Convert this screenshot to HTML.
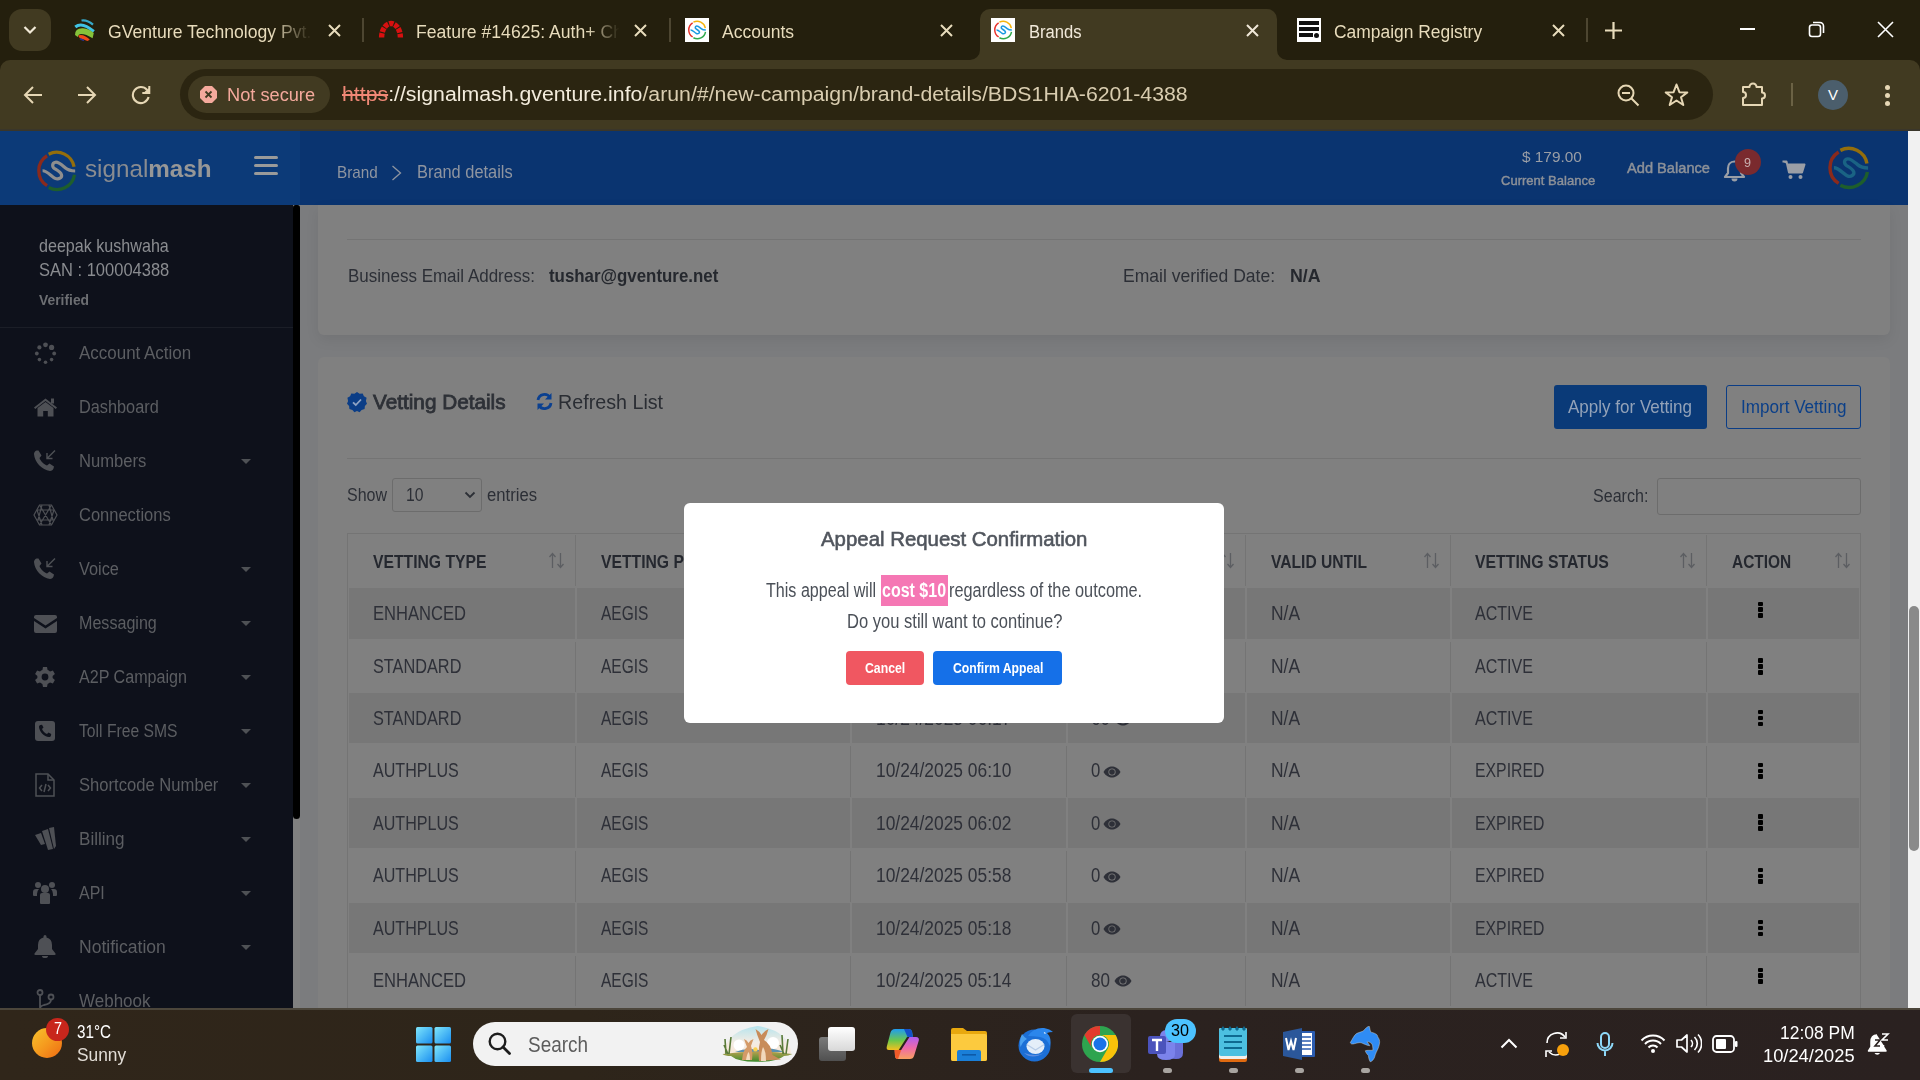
<!DOCTYPE html>
<html><head><meta charset="utf-8">
<style>
*{box-sizing:border-box;margin:0;padding:0}
html,body{width:1920px;height:1080px;overflow:hidden;background:#241f0d;font-family:"Liberation Sans",sans-serif}
.a{position:absolute}
.tx{position:absolute;white-space:nowrap;transform-origin:0 0}
.fav{width:24px;height:24px;background:#fff}
</style></head><body>
<!-- TAB STRIP -->
<div class="a" style="left:0;top:0;width:1920px;height:60px;background:#241f0d"></div>
<div class="a" style="left:9px;top:9px;width:42px;height:42px;border-radius:13px;background:#413a21"></div>
<svg class="a" style="left:23px;top:25px" width="14" height="10" viewBox="0 0 14 10"><path d="M1.5 2 L7 7.5 L12.5 2" fill="none" stroke="#f2ead8" stroke-width="2.2"/></svg>
<!-- tab1 -->
<svg class="a" style="left:74px;top:19px" width="22" height="22" viewBox="0 0 22 22">
<path d="M7.5 1.5Q13 0.5 19 5.6" fill="none" stroke="#36a8c8" stroke-width="2.2"/>
<path d="M1.3 8Q8 2.2 19.8 12.5" fill="none" stroke="#40c4e4" stroke-width="3"/>
<path d="M1 16Q1 8.8 9 9.3Q15.5 10 19.8 14L18.6 19.3Q12 15 7.2 15Q4.3 15 3.8 18Z" fill="#86c23a"/>
<path d="M4 16.6Q7.5 15.4 11.2 17.2Q14.5 19 15.8 20.8L13.4 22Q9.5 20.3 6 19.6Z" fill="#f24818"/>
<path d="M6 19.8L10 21.5" fill="none" stroke="#2a3090" stroke-width="1.5"/>
</svg>
<svg class="a xx" style="left:328px;top:24px" width="13" height="13" viewBox="0 0 13 13"><path d="M1 1L12 12M12 1L1 12" stroke="#e8dcbc" stroke-width="2"/></svg>
<div class="a" style="left:362px;top:18px;width:2px;height:24px;background:#4d4631"></div>
<!-- tab2 -->
<svg class="a" style="left:378px;top:20px" width="26" height="18" viewBox="0 0 26 18">
<path d="M3.6 17.5A9.4 14 0 0 1 22.4 17.5" fill="none" stroke="#d81010" stroke-width="5.4" stroke-dasharray="4.5 1"/>
</svg>
<svg class="a" style="left:634px;top:24px" width="13" height="13" viewBox="0 0 13 13"><path d="M1 1L12 12M12 1L1 12" stroke="#e8dcbc" stroke-width="2"/></svg>
<div class="a" style="left:669px;top:18px;width:2px;height:24px;background:#4d4631"></div>
<!-- tab3 -->
<svg class="a" style="left:685px;top:18px" width="24" height="24" viewBox="0 0 46 46"><rect width="46" height="46" fill="#fff"/>
<path d="M13.2 6.3A19.4 19.4 0 0 0 13.2 39.1" fill="none" stroke="#e8312a" stroke-width="3.4" transform="translate(23 23) scale(0.82) translate(-23.4 -22.9)"/>
<path d="M15 4.6A19.4 19.4 0 0 1 42.8 18.3" fill="none" stroke="#f5b40c" stroke-width="3.4" transform="translate(23 23) scale(0.82) translate(-23.4 -22.9)"/>
<path d="M43.3 27.1A19.4 19.4 0 0 1 15 41" fill="none" stroke="#2fa84a" stroke-width="3.4" transform="translate(23 23) scale(0.82) translate(-23.4 -22.9)"/>
<path d="M8.3 22.7C13 22.5 18 29 22 31C26 33 30 30 29 27C28 24 24 22 21.5 20.5C18.5 18.5 18.5 14 22.5 13.4C26 13 30 17 33 19.5C36 22 38 23 44 23" fill="none" stroke="#1a9ae0" stroke-width="3.6" transform="translate(23 23) scale(0.82) translate(-23.4 -22.9)"/></svg>
<svg class="a" style="left:940px;top:24px" width="13" height="13" viewBox="0 0 13 13"><path d="M1 1L12 12M12 1L1 12" stroke="#e8dcbc" stroke-width="2"/></svg>
<!-- active tab -->
<div class="a" style="left:980px;top:9px;width:297px;height:51px;background:#413a21;border-radius:10px 10px 0 0"></div>
<svg class="a" style="left:970px;top:50px" width="10" height="10" viewBox="0 0 10 10"><path d="M0 10 A10 10 0 0 0 10 0 V10Z" fill="#413a21"/></svg>
<svg class="a" style="left:1277px;top:50px" width="10" height="10" viewBox="0 0 10 10"><path d="M0 0 A10 10 0 0 0 10 10 H0Z" fill="#413a21"/></svg>
<svg class="a" style="left:991px;top:18px" width="24" height="24" viewBox="0 0 46 46"><rect width="46" height="46" fill="#fff"/>
<path d="M13.2 6.3A19.4 19.4 0 0 0 13.2 39.1" fill="none" stroke="#e8312a" stroke-width="3.4" transform="translate(23 23) scale(0.82) translate(-23.4 -22.9)"/>
<path d="M15 4.6A19.4 19.4 0 0 1 42.8 18.3" fill="none" stroke="#f5b40c" stroke-width="3.4" transform="translate(23 23) scale(0.82) translate(-23.4 -22.9)"/>
<path d="M43.3 27.1A19.4 19.4 0 0 1 15 41" fill="none" stroke="#2fa84a" stroke-width="3.4" transform="translate(23 23) scale(0.82) translate(-23.4 -22.9)"/>
<path d="M8.3 22.7C13 22.5 18 29 22 31C26 33 30 30 29 27C28 24 24 22 21.5 20.5C18.5 18.5 18.5 14 22.5 13.4C26 13 30 17 33 19.5C36 22 38 23 44 23" fill="none" stroke="#1a9ae0" stroke-width="3.6" transform="translate(23 23) scale(0.82) translate(-23.4 -22.9)"/></svg>
<svg class="a" style="left:1246px;top:24px" width="13" height="13" viewBox="0 0 13 13"><path d="M1 1L12 12M12 1L1 12" stroke="#f0e8d8" stroke-width="2"/></svg>
<!-- tab5 -->
<svg class="a" style="left:1297px;top:18px" width="24" height="24" viewBox="0 0 24 24">
<rect width="24" height="24" fill="#fff"/><rect x="2" y="3" width="20" height="4" fill="#111"/><rect x="2" y="9" width="20" height="4" fill="#111"/><rect x="2" y="15" width="14" height="4" fill="#111"/><circle cx="19.5" cy="17.5" r="2.5" fill="#111"/>
</svg>
<svg class="a" style="left:1552px;top:24px" width="13" height="13" viewBox="0 0 13 13"><path d="M1 1L12 12M12 1L1 12" stroke="#e8dcbc" stroke-width="2"/></svg>
<div class="a" style="left:1586px;top:18px;width:2px;height:24px;background:#4d4631"></div>
<svg class="a" style="left:1605px;top:22px" width="17" height="17" viewBox="0 0 17 17"><path d="M8.5 0V17M0 8.5H17" stroke="#e8dcbc" stroke-width="2.2"/></svg>
<!-- window controls -->
<div class="a" style="left:1740px;top:28px;width:15px;height:2px;background:#fff"></div>
<svg class="a" style="left:1808px;top:21px" width="17" height="17" viewBox="0 0 17 17"><rect x="1.5" y="4" width="11" height="11.5" rx="2.5" fill="none" stroke="#fff" stroke-width="1.6"/><path d="M5 1.5H12A3.5 3.5 0 0 1 15.5 5V12" fill="none" stroke="#fff" stroke-width="1.6"/></svg>
<svg class="a" style="left:1877px;top:21px" width="17" height="17" viewBox="0 0 17 17"><path d="M1 1L16 16M16 1L1 16" stroke="#fff" stroke-width="1.6"/></svg>

<!-- TOOLBAR -->
<div class="a" style="left:0;top:60px;width:1920px;height:69px;background:#413a21;border-radius:10px 10px 0 0"></div>
<div class="a" style="left:0;top:129px;width:1920px;height:2px;background:#3a362a"></div>
<svg class="a" style="left:23px;top:85px" width="20" height="20" viewBox="0 0 20 20"><path d="M19 10H2.5M10 2L2 10L10 18" fill="none" stroke="#e6d7b5" stroke-width="2"/></svg>
<svg class="a" style="left:77px;top:85px" width="20" height="20" viewBox="0 0 20 20"><path d="M1 10H17.5M10 2L18 10L10 18" fill="none" stroke="#e6d7b5" stroke-width="2"/></svg>
<svg class="a" style="left:131px;top:85px" width="20" height="20" viewBox="0 0 20 20"><path d="M16 4.9A8 8 0 1 0 17.6 12.1" fill="none" stroke="#e6d7b5" stroke-width="2.1"/><path d="M11.3 7H17.3V0.9H19.3V9H11.3Z M13.5 7L17.3 3.2V7Z" fill="#e6d7b5"/></svg>
<div class="a" style="left:180px;top:69px;width:1533px;height:51px;border-radius:26px;background:#2b2511"></div>
<div class="a" style="left:188px;top:76px;width:142px;height:37px;border-radius:19px;background:#413a21"></div>
<svg class="a" style="left:200px;top:86px" width="17" height="17" viewBox="0 0 17 17"><path d="M5 0H12L17 5V12L12 17H5L0 12V5Z" fill="#f4a99c"/><path d="M5.5 5.5L11.5 11.5M11.5 5.5L5.5 11.5" stroke="#413a21" stroke-width="1.8"/></svg>
<svg class="a" style="left:1617px;top:84px" width="23" height="23" viewBox="0 0 23 23"><circle cx="9" cy="9" r="7.5" fill="none" stroke="#e6d7b5" stroke-width="2"/><path d="M5 9H13M14.5 14.5L21.5 21.5" stroke="#e6d7b5" stroke-width="2"/></svg>
<svg class="a" style="left:1664px;top:83px" width="25" height="24" viewBox="0 0 25 24"><path d="M12.5 1.5L15.4 9.2L23.3 9.4L17 14.3L19.3 22L12.5 17.5L5.7 22L8 14.3L1.7 9.4L9.6 9.2Z" fill="none" stroke="#e6d7b5" stroke-width="2" stroke-linejoin="round"/></svg>
<svg class="a" style="left:1741px;top:81px" width="27" height="26" viewBox="0 0 27 26"><path d="M2 6H8.5A3.5 3.5 0 0 1 15.5 6H21V11.5A3 3 0 0 1 21 17.5V24H2V17A3 3 0 0 0 2 11Z" fill="none" stroke="#e6d7b5" stroke-width="2" stroke-linejoin="round"/></svg>
<div class="a" style="left:1791px;top:83px;width:2px;height:23px;background:#6b6245"></div>
<div class="a" style="left:1818px;top:80px;width:30px;height:30px;border-radius:50%;background:#4b5e6c;color:#fff;font-size:15px;text-align:center;line-height:30px">V</div>
<div class="a" style="left:1885px;top:85px;width:5px;height:5px;border-radius:50%;background:#e6d7b5"></div>
<div class="a" style="left:1885px;top:93px;width:5px;height:5px;border-radius:50%;background:#e6d7b5"></div>
<div class="a" style="left:1885px;top:101px;width:5px;height:5px;border-radius:50%;background:#e6d7b5"></div>
<!-- ======== PAGE ======== -->
<div class="a" style="left:0;top:131px;width:1908px;height:74px;background:#0a3470"></div>
<div class="a" style="left:0;top:131px;width:300px;height:74px;background:#0c3a78"></div>
<!-- logo -->
<svg class="a" style="left:35px;top:150px" width="42" height="42" viewBox="0 0 46 46">
<path d="M13.2 6.3A19.4 19.4 0 0 0 13.2 39.1" fill="none" stroke="#8a2a1c" stroke-width="3.6"/>
<path d="M15 4.6A19.4 19.4 0 0 1 42.8 18.3" fill="none" stroke="#946e0c" stroke-width="3.6"/>
<path d="M43.3 27.1A19.4 19.4 0 0 1 15 41" fill="none" stroke="#1e5e2c" stroke-width="3.6"/>
<path d="M8.3 22.7C13 22.5 18 29 22 31C26 33 30 30 29 27C28 24 24 22 21.5 20.5C18.5 18.5 18.5 14 22.5 13.4C26 13 30 17 33 19.5C36 22 38 23 44 23" fill="none" stroke="#8e8e8e" stroke-width="3.5"/>
</svg>
<div class="a" style="left:254px;top:156px;width:23.5px;height:3px;border-radius:2px;background:#9a9a9a"></div>
<div class="a" style="left:254px;top:164px;width:23.5px;height:3px;border-radius:2px;background:#9a9a9a"></div>
<div class="a" style="left:254px;top:172px;width:23.5px;height:3px;border-radius:2px;background:#9a9a9a"></div>
<svg class="a" style="left:391px;top:165px" width="11" height="16" viewBox="0 0 11 16"><path d="M1.5 1L9.5 8L1.5 15" fill="none" stroke="#8f95a0" stroke-width="1.3"/></svg>
<!-- bell -->
<svg class="a" style="left:1723px;top:159px" width="23" height="23" viewBox="0 0 23 23"><path d="M11.5 2.5C7 2.5 5 6 5 9.5V14L2 18H21L18 14V9.5C18 6 16 2.5 11.5 2.5Z" fill="none" stroke="#9a9ea6" stroke-width="2.2" stroke-linejoin="round"/><path d="M8.5 19.5A3 3 0 0 0 14.5 19.5" fill="#9a9ea6"/></svg>
<div class="a" style="left:1735px;top:149px;width:26px;height:26px;border-radius:50%;background:#7a2a2e"></div>
<!-- cart -->
<svg class="a" style="left:1782px;top:160px" width="24" height="20" viewBox="0 0 24 20"><path d="M0.5 1.5H4.5L7 12.5H20L22.5 4.5H6" fill="#9a9ea6" stroke="#9a9ea6" stroke-width="2" stroke-linejoin="round"/><circle cx="8.5" cy="17" r="2" fill="#9a9ea6"/><circle cx="18.5" cy="17" r="2" fill="#9a9ea6"/></svg>
<!-- right logo -->
<svg class="a" style="left:1826px;top:146px" width="44" height="44" viewBox="0 0 46 46">
<path d="M13.2 6.3A19.4 19.4 0 0 0 13.2 39.1" fill="none" stroke="#8a2a1c" stroke-width="3.6"/>
<path d="M15 4.6A19.4 19.4 0 0 1 42.8 18.3" fill="none" stroke="#946e0c" stroke-width="3.6"/>
<path d="M43.3 27.1A19.4 19.4 0 0 1 15 41" fill="none" stroke="#1e5e2c" stroke-width="3.6"/>
<path d="M8.3 22.7C13 22.5 18 29 22 31C26 33 30 30 29 27C28 24 24 22 21.5 20.5C18.5 18.5 18.5 14 22.5 13.4C26 13 30 17 33 19.5C36 22 38 23 44 23" fill="none" stroke="#1a6384" stroke-width="3.5"/>
</svg>

<!-- sidebar -->
<div class="a" style="left:0;top:205px;width:293px;height:803px;background:#0e111b"></div>
<div class="a" style="left:293px;top:205px;width:7px;height:803px;background:#808080"></div>
<div class="a" style="left:293px;top:205px;width:7px;height:614px;background:#000;border-radius:3px 3px 4px 4px"></div>
<div class="a" style="left:0;top:327px;width:293px;height:1px;background:#1b1e27"></div>

<!-- content bg -->
<div class="a" style="left:300px;top:205px;width:1608px;height:803px;background:#7b7c7e"></div>
<!-- card1 -->
<div class="a" style="left:318px;top:205px;width:1572px;height:130px;background:#808080;border-radius:0 0 6px 6px;box-shadow:0 5px 14px rgba(0,0,0,0.07)"></div>
<div class="a" style="left:347px;top:239px;width:1514px;height:1px;background:#747474"></div>
<!-- card2 -->
<div class="a" style="left:318px;top:357px;width:1572px;height:651px;background:#808080;border-radius:6px 6px 0 0"></div>
<svg class="a" style="left:346px;top:391px" width="22" height="22" viewBox="0 0 22 22">
<path d="M11 1L13.6 2.7L16.7 2.4L17.9 5.2L20.6 6.8L19.9 9.9L21 12.7L18.9 15L18.6 18.1L15.6 18.9L13.6 21.3L11 20L8.4 21.3L6.4 18.9L3.4 18.1L3.1 15L1 12.7L2.1 9.9L1.4 6.8L4.1 5.2L5.3 2.4L8.4 2.7Z" fill="#0b3d86"/>
<path d="M7 11.3L9.8 14L15 8.5" fill="none" stroke="#8fa3c4" stroke-width="1.8"/>
</svg>
<svg class="a" style="left:535px;top:392px" width="19" height="19" viewBox="0 0 19 19">
<path d="M3 8A6.5 6.5 0 0 1 15 5.5" fill="none" stroke="#0b4090" stroke-width="2.8"/><path d="M16.5 1V7.5H10Z" fill="#0b4090"/>
<path d="M16 11A6.5 6.5 0 0 1 4 13.5" fill="none" stroke="#0b4090" stroke-width="2.8"/><path d="M2.5 18V11.5H9Z" fill="#0b4090"/>
</svg>
<div class="a" style="left:1554px;top:385px;width:153px;height:44px;background:#0a3a78;border-radius:3px"></div>
<div class="a" style="left:1726px;top:385px;width:135px;height:44px;border:1.5px solid #0b3d86;border-radius:3px"></div>
<div class="a" style="left:347px;top:458px;width:1514px;height:1px;background:#747474"></div>
<div class="a" style="left:392px;top:478px;width:90px;height:34px;border:1px solid #6c6c6c;border-radius:3px"></div>
<svg class="a" style="left:464px;top:491px" width="12" height="8" viewBox="0 0 12 8"><path d="M1.5 1.5L6 6L10.5 1.5" fill="none" stroke="#2c2f36" stroke-width="1.8"/></svg>
<div class="a" style="left:1657px;top:478px;width:204px;height:37px;border:1px solid #6c6c6c;border-radius:3px"></div>
<!-- browser scrollbar -->
<div class="a" style="left:1908px;top:131px;width:12px;height:877px;background:#f1f1f1"></div>
<div class="a" style="left:1909px;top:606px;width:10px;height:245px;border-radius:5px;background:#8a8a8a"></div>
<!-- sidebar icons -->
<svg class="a" style="left:34px;top:342px" width="23" height="23" viewBox="0 0 23 23" fill="#4e5055">
<circle cx="11.5" cy="2.8" r="2.4"/><circle cx="17.6" cy="5.4" r="2.6"/><circle cx="20.2" cy="11.5" r="1.9"/><circle cx="17.6" cy="17.6" r="1.8"/>
<circle cx="11.5" cy="20.2" r="1.8"/><circle cx="5.4" cy="17.6" r="1.8"/><circle cx="2.8" cy="11.5" r="1.9"/><circle cx="5.4" cy="5.4" r="2.1"/>
</svg>
<svg class="a" style="left:33px;top:397px" width="25" height="20" viewBox="0 0 25 20" fill="#4e5055">
<path d="M1 10.5L12.5 1.5L24 10.5L22.8 12L12.5 4L2.2 12Z"/><rect x="18" y="1.5" width="3" height="5"/>
<path d="M4.5 11L12.5 5L20.5 11V19.5H14.8V14H10.2V19.5H4.5Z"/>
</svg>
<svg class="a" style="left:33px;top:449px" width="24" height="23" viewBox="0 0 24 23">
<path d="M3.5 1.5C2 2 1 3.5 1 5C1.5 13 9 21 17 22C18.8 22 20 21 20.5 19.5L21 17.5L16.5 14.5L14 16.5C11 15.5 7.5 12 6.5 9L8.5 6.5L5.5 1.5Z" fill="#4e5055"/>
<path d="M22 1.5L14 9.5M14 4V9.5H19.5" fill="none" stroke="#4e5055" stroke-width="1.4"/>
</svg>
<svg class="a" style="left:33px;top:504px" width="25" height="22" viewBox="0 0 25 22" fill="none" stroke="#4e5055" stroke-width="1.2">
<path d="M6.5 1H18.5L24 11L18.5 21H6.5L1 11Z"/><path d="M6.5 1L18.5 21M18.5 1L6.5 21M4 6H21M4 16H21M9 1L5 16M16 1L20 16M9 21L4 6M16 21L21 6"/>
</svg>
<svg class="a" style="left:33px;top:557px" width="24" height="23" viewBox="0 0 24 23">
<path d="M3.5 1.5C2 2 1 3.5 1 5C1.5 13 9 21 17 22C18.8 22 20 21 20.5 19.5L21 17.5L16.5 14.5L14 16.5C11 15.5 7.5 12 6.5 9L8.5 6.5L5.5 1.5Z" fill="#4e5055"/>
<path d="M22 1.5L14 9.5M14 4V9.5H19.5" fill="none" stroke="#4e5055" stroke-width="1.4"/>
</svg>
<svg class="a" style="left:34px;top:615px" width="23" height="18" viewBox="0 0 23 18" fill="#4e5055">
<path d="M2 0H21Q23 0 23 2V3L11.5 10.5L0 3V2Q0 0 2 0Z"/><path d="M0 6L11.5 13.5L23 6V16Q23 18 21 18H2Q0 18 0 16Z"/>
</svg>
<svg class="a" style="left:35px;top:667px" width="20" height="20" viewBox="0 0 20 20" fill="#4e5055">
<path d="M8 0H12L12.6 3A7.5 7.5 0 0 1 15 4.4L17.9 3.4L19.9 6.9L17.6 8.9A7.5 7.5 0 0 1 17.6 11.1L19.9 13.1L17.9 16.6L15 15.6A7.5 7.5 0 0 1 12.6 17L12 20H8L7.4 17A7.5 7.5 0 0 1 5 15.6L2.1 16.6L0.1 13.1L2.4 11.1A7.5 7.5 0 0 1 2.4 8.9L0.1 6.9L2.1 3.4L5 4.4A7.5 7.5 0 0 1 7.4 3ZM10 6.6A3.4 3.4 0 1 0 10 13.4A3.4 3.4 0 1 0 10 6.6Z"/>
</svg>
<svg class="a" style="left:35px;top:721px" width="20" height="20" viewBox="0 0 20 20">
<rect x="0" y="0" width="20" height="20" rx="3" fill="#4e5055"/>
<path d="M5.5 4C4.5 4.3 4 5 4 6C4.5 11 9 15.5 14 16C15 16 15.7 15.5 16 14.5L16.2 13L13.5 11.5L12 13C10 12.3 7.7 10 7 8L8.5 6.5L7 3.8Z" fill="#0e111b"/>
</svg>
<svg class="a" style="left:35px;top:773px" width="20" height="24" viewBox="0 0 20 24" fill="none" stroke="#4e5055" stroke-width="1.5">
<path d="M1 1H13L19 7V23H1Z"/><path d="M13 1V7H19"/><path d="M7 12L4.5 15L7 18M13 12L15.5 15L13 18M11 11L9 19"/>
</svg>
<svg class="a" style="left:34px;top:827px" width="23" height="24" viewBox="0 0 23 24" fill="#4e5055">
<path d="M1 8L7 6L11 17L7 18Z"/><path d="M8 4L14 2L19 22L14 23Z"/><path d="M15 1L20 0L22 19L20 22Z"/>
</svg>
<svg class="a" style="left:33px;top:881px" width="24" height="24" viewBox="0 0 24 24" fill="#4e5055">
<circle cx="5" cy="4" r="3"/><circle cx="19" cy="4" r="3"/><circle cx="12" cy="8" r="4"/>
<path d="M0 11Q0 8 3 8H6Q4 10 4 13V15H1Q0 15 0 14Z"/><path d="M24 11Q24 8 21 8H18Q20 10 20 13V15H23Q24 15 24 14Z"/>
<path d="M7 14Q7 12 9 12H15Q17 12 17 14V22Q17 23 16 23H8Q7 23 7 22Z"/>
</svg>
<svg class="a" style="left:34px;top:935px" width="22" height="23" viewBox="0 0 22 23" fill="#4e5055">
<path d="M11 0Q12.5 0 12.5 1.5V2.5Q18 3.8 18 10V14L21.5 18.5Q22 20 20.5 20H1.5Q0 20 0.5 18.5L4 14V10Q4 3.8 9.5 2.5V1.5Q9.5 0 11 0Z"/><path d="M8 21H14Q14 23 11 23Q8 23 8 21Z"/>
</svg>
<svg class="a" style="left:36px;top:989px" width="19" height="22" viewBox="0 0 19 22" fill="none" stroke="#4e5055" stroke-width="1.8">
<circle cx="4" cy="3.5" r="2.5"/><circle cx="15" cy="8" r="2.5"/><path d="M4 6V22M15 10.5Q15 15 8 16Q4 17 4 20"/>
</svg>
<div class="a" style="left:347px;top:533px;width:1514px;height:475px;border:1px solid #747474;border-bottom:none"></div>
<div class="a" style="left:575px;top:535px;width:1px;height:51px;background:#747474"></div>
<div class="a" style="left:850px;top:535px;width:1px;height:51px;background:#747474"></div>
<div class="a" style="left:1066px;top:535px;width:1px;height:51px;background:#747474"></div>
<div class="a" style="left:1245px;top:535px;width:1px;height:51px;background:#747474"></div>
<div class="a" style="left:1450px;top:535px;width:1px;height:51px;background:#747474"></div>
<div class="a" style="left:1706px;top:535px;width:1px;height:51px;background:#747474"></div>
<svg class="a" style="left:548px;top:552px" width="17" height="17" viewBox="0 0 17 17"><path d="M4.5 16V2M1.5 5L4.5 1.5L7.5 5" fill="none" stroke="#5c5e62" stroke-width="1.3"/><path d="M12.5 1V15M9.5 12L12.5 15.5L15.5 12" fill="none" stroke="#5c5e62" stroke-width="1.3"/></svg>
<svg class="a" style="left:823px;top:552px" width="17" height="17" viewBox="0 0 17 17"><path d="M4.5 16V2M1.5 5L4.5 1.5L7.5 5" fill="none" stroke="#5c5e62" stroke-width="1.3"/><path d="M12.5 1V15M9.5 12L12.5 15.5L15.5 12" fill="none" stroke="#5c5e62" stroke-width="1.3"/></svg>
<svg class="a" style="left:1039px;top:552px" width="17" height="17" viewBox="0 0 17 17"><path d="M4.5 16V2M1.5 5L4.5 1.5L7.5 5" fill="none" stroke="#5c5e62" stroke-width="1.3"/><path d="M12.5 1V15M9.5 12L12.5 15.5L15.5 12" fill="none" stroke="#5c5e62" stroke-width="1.3"/></svg>
<svg class="a" style="left:1218px;top:552px" width="17" height="17" viewBox="0 0 17 17"><path d="M4.5 16V2M1.5 5L4.5 1.5L7.5 5" fill="none" stroke="#5c5e62" stroke-width="1.3"/><path d="M12.5 1V15M9.5 12L12.5 15.5L15.5 12" fill="none" stroke="#5c5e62" stroke-width="1.3"/></svg>
<svg class="a" style="left:1423px;top:552px" width="17" height="17" viewBox="0 0 17 17"><path d="M4.5 16V2M1.5 5L4.5 1.5L7.5 5" fill="none" stroke="#5c5e62" stroke-width="1.3"/><path d="M12.5 1V15M9.5 12L12.5 15.5L15.5 12" fill="none" stroke="#5c5e62" stroke-width="1.3"/></svg>
<svg class="a" style="left:1679px;top:552px" width="17" height="17" viewBox="0 0 17 17"><path d="M4.5 16V2M1.5 5L4.5 1.5L7.5 5" fill="none" stroke="#5c5e62" stroke-width="1.3"/><path d="M12.5 1V15M9.5 12L12.5 15.5L15.5 12" fill="none" stroke="#5c5e62" stroke-width="1.3"/></svg>
<svg class="a" style="left:1834px;top:552px" width="17" height="17" viewBox="0 0 17 17"><path d="M4.5 16V2M1.5 5L4.5 1.5L7.5 5" fill="none" stroke="#5c5e62" stroke-width="1.3"/><path d="M12.5 1V15M9.5 12L12.5 15.5L15.5 12" fill="none" stroke="#5c5e62" stroke-width="1.3"/></svg>
<div class="a" style="left:349px;top:588.0px;width:226px;height:50.5px;background:#777777"></div>
<div class="a" style="left:577px;top:588.0px;width:273px;height:50.5px;background:#777777"></div>
<div class="a" style="left:852px;top:588.0px;width:214px;height:50.5px;background:#777777"></div>
<div class="a" style="left:1068px;top:588.0px;width:177px;height:50.5px;background:#777777"></div>
<div class="a" style="left:1247px;top:588.0px;width:203px;height:50.5px;background:#777777"></div>
<div class="a" style="left:1452px;top:588.0px;width:254px;height:50.5px;background:#777777"></div>
<div class="a" style="left:1708px;top:588.0px;width:151px;height:50.5px;background:#777777"></div>
<div class="a" style="left:1758px;top:601.5px;width:5px;height:4.6px;border-radius:1px;background:#000"></div>
<div class="a" style="left:1758px;top:607.3px;width:5px;height:4.6px;border-radius:1px;background:#000"></div>
<div class="a" style="left:1758px;top:613.1px;width:5px;height:4.6px;border-radius:1px;background:#000"></div>
<svg class="a" style="left:1113.7px;top:608.5px" width="18" height="12" viewBox="0 0 18 12"><path d="M0.5 6C3 1.8 6 0.5 9 0.5C12 0.5 15 1.8 17.5 6C15 10.2 12 11.5 9 11.5C6 11.5 3 10.2 0.5 6Z" fill="#2e3038"/><circle cx="9" cy="6" r="3.6" fill="#777777"/><circle cx="9" cy="6" r="2.8" fill="#2e3038"/></svg>
<div class="a" style="left:575px;top:641.5px;width:1px;height:50.5px;background:#747474"></div>
<div class="a" style="left:850px;top:641.5px;width:1px;height:50.5px;background:#747474"></div>
<div class="a" style="left:1066px;top:641.5px;width:1px;height:50.5px;background:#747474"></div>
<div class="a" style="left:1245px;top:641.5px;width:1px;height:50.5px;background:#747474"></div>
<div class="a" style="left:1450px;top:641.5px;width:1px;height:50.5px;background:#747474"></div>
<div class="a" style="left:1706px;top:641.5px;width:1px;height:50.5px;background:#747474"></div>
<div class="a" style="left:1758px;top:658.4px;width:5px;height:4.6px;border-radius:1px;background:#000"></div>
<div class="a" style="left:1758px;top:664.2px;width:5px;height:4.6px;border-radius:1px;background:#000"></div>
<div class="a" style="left:1758px;top:670.0px;width:5px;height:4.6px;border-radius:1px;background:#000"></div>
<svg class="a" style="left:1113.7px;top:661.0px" width="18" height="12" viewBox="0 0 18 12"><path d="M0.5 6C3 1.8 6 0.5 9 0.5C12 0.5 15 1.8 17.5 6C15 10.2 12 11.5 9 11.5C6 11.5 3 10.2 0.5 6Z" fill="#2e3038"/><circle cx="9" cy="6" r="3.6" fill="#808080"/><circle cx="9" cy="6" r="2.8" fill="#2e3038"/></svg>
<div class="a" style="left:349px;top:693.0px;width:226px;height:50.0px;background:#777777"></div>
<div class="a" style="left:577px;top:693.0px;width:273px;height:50.0px;background:#777777"></div>
<div class="a" style="left:852px;top:693.0px;width:214px;height:50.0px;background:#777777"></div>
<div class="a" style="left:1068px;top:693.0px;width:177px;height:50.0px;background:#777777"></div>
<div class="a" style="left:1247px;top:693.0px;width:203px;height:50.0px;background:#777777"></div>
<div class="a" style="left:1452px;top:693.0px;width:254px;height:50.0px;background:#777777"></div>
<div class="a" style="left:1708px;top:693.0px;width:151px;height:50.0px;background:#777777"></div>
<div class="a" style="left:1758px;top:709.9px;width:5px;height:4.6px;border-radius:1px;background:#000"></div>
<div class="a" style="left:1758px;top:715.7px;width:5px;height:4.6px;border-radius:1px;background:#000"></div>
<div class="a" style="left:1758px;top:721.5px;width:5px;height:4.6px;border-radius:1px;background:#000"></div>
<svg class="a" style="left:1113.7px;top:713.5px" width="18" height="12" viewBox="0 0 18 12"><path d="M0.5 6C3 1.8 6 0.5 9 0.5C12 0.5 15 1.8 17.5 6C15 10.2 12 11.5 9 11.5C6 11.5 3 10.2 0.5 6Z" fill="#2e3038"/><circle cx="9" cy="6" r="3.6" fill="#777777"/><circle cx="9" cy="6" r="2.8" fill="#2e3038"/></svg>
<div class="a" style="left:575px;top:746.0px;width:1px;height:50.5px;background:#747474"></div>
<div class="a" style="left:850px;top:746.0px;width:1px;height:50.5px;background:#747474"></div>
<div class="a" style="left:1066px;top:746.0px;width:1px;height:50.5px;background:#747474"></div>
<div class="a" style="left:1245px;top:746.0px;width:1px;height:50.5px;background:#747474"></div>
<div class="a" style="left:1450px;top:746.0px;width:1px;height:50.5px;background:#747474"></div>
<div class="a" style="left:1706px;top:746.0px;width:1px;height:50.5px;background:#747474"></div>
<div class="a" style="left:1758px;top:762.8px;width:5px;height:4.6px;border-radius:1px;background:#000"></div>
<div class="a" style="left:1758px;top:768.6px;width:5px;height:4.6px;border-radius:1px;background:#000"></div>
<div class="a" style="left:1758px;top:774.4px;width:5px;height:4.6px;border-radius:1px;background:#000"></div>
<svg class="a" style="left:1103.4px;top:765.5px" width="18" height="12" viewBox="0 0 18 12"><path d="M0.5 6C3 1.8 6 0.5 9 0.5C12 0.5 15 1.8 17.5 6C15 10.2 12 11.5 9 11.5C6 11.5 3 10.2 0.5 6Z" fill="#2e3038"/><circle cx="9" cy="6" r="3.6" fill="#808080"/><circle cx="9" cy="6" r="2.8" fill="#2e3038"/></svg>
<div class="a" style="left:349px;top:797.5px;width:226px;height:50.5px;background:#777777"></div>
<div class="a" style="left:577px;top:797.5px;width:273px;height:50.5px;background:#777777"></div>
<div class="a" style="left:852px;top:797.5px;width:214px;height:50.5px;background:#777777"></div>
<div class="a" style="left:1068px;top:797.5px;width:177px;height:50.5px;background:#777777"></div>
<div class="a" style="left:1247px;top:797.5px;width:203px;height:50.5px;background:#777777"></div>
<div class="a" style="left:1452px;top:797.5px;width:254px;height:50.5px;background:#777777"></div>
<div class="a" style="left:1708px;top:797.5px;width:151px;height:50.5px;background:#777777"></div>
<div class="a" style="left:1758px;top:814.4px;width:5px;height:4.6px;border-radius:1px;background:#000"></div>
<div class="a" style="left:1758px;top:820.2px;width:5px;height:4.6px;border-radius:1px;background:#000"></div>
<div class="a" style="left:1758px;top:826.0px;width:5px;height:4.6px;border-radius:1px;background:#000"></div>
<svg class="a" style="left:1103.4px;top:818.0px" width="18" height="12" viewBox="0 0 18 12"><path d="M0.5 6C3 1.8 6 0.5 9 0.5C12 0.5 15 1.8 17.5 6C15 10.2 12 11.5 9 11.5C6 11.5 3 10.2 0.5 6Z" fill="#2e3038"/><circle cx="9" cy="6" r="3.6" fill="#777777"/><circle cx="9" cy="6" r="2.8" fill="#2e3038"/></svg>
<div class="a" style="left:575px;top:851.0px;width:1px;height:50.5px;background:#747474"></div>
<div class="a" style="left:850px;top:851.0px;width:1px;height:50.5px;background:#747474"></div>
<div class="a" style="left:1066px;top:851.0px;width:1px;height:50.5px;background:#747474"></div>
<div class="a" style="left:1245px;top:851.0px;width:1px;height:50.5px;background:#747474"></div>
<div class="a" style="left:1450px;top:851.0px;width:1px;height:50.5px;background:#747474"></div>
<div class="a" style="left:1706px;top:851.0px;width:1px;height:50.5px;background:#747474"></div>
<div class="a" style="left:1758px;top:867.8px;width:5px;height:4.6px;border-radius:1px;background:#000"></div>
<div class="a" style="left:1758px;top:873.6px;width:5px;height:4.6px;border-radius:1px;background:#000"></div>
<div class="a" style="left:1758px;top:879.4px;width:5px;height:4.6px;border-radius:1px;background:#000"></div>
<svg class="a" style="left:1103.4px;top:870.5px" width="18" height="12" viewBox="0 0 18 12"><path d="M0.5 6C3 1.8 6 0.5 9 0.5C12 0.5 15 1.8 17.5 6C15 10.2 12 11.5 9 11.5C6 11.5 3 10.2 0.5 6Z" fill="#2e3038"/><circle cx="9" cy="6" r="3.6" fill="#808080"/><circle cx="9" cy="6" r="2.8" fill="#2e3038"/></svg>
<div class="a" style="left:349px;top:902.5px;width:226px;height:50.0px;background:#777777"></div>
<div class="a" style="left:577px;top:902.5px;width:273px;height:50.0px;background:#777777"></div>
<div class="a" style="left:852px;top:902.5px;width:214px;height:50.0px;background:#777777"></div>
<div class="a" style="left:1068px;top:902.5px;width:177px;height:50.0px;background:#777777"></div>
<div class="a" style="left:1247px;top:902.5px;width:203px;height:50.0px;background:#777777"></div>
<div class="a" style="left:1452px;top:902.5px;width:254px;height:50.0px;background:#777777"></div>
<div class="a" style="left:1708px;top:902.5px;width:151px;height:50.0px;background:#777777"></div>
<div class="a" style="left:1758px;top:919.9px;width:5px;height:4.6px;border-radius:1px;background:#000"></div>
<div class="a" style="left:1758px;top:925.7px;width:5px;height:4.6px;border-radius:1px;background:#000"></div>
<div class="a" style="left:1758px;top:931.5px;width:5px;height:4.6px;border-radius:1px;background:#000"></div>
<svg class="a" style="left:1103.4px;top:923.0px" width="18" height="12" viewBox="0 0 18 12"><path d="M0.5 6C3 1.8 6 0.5 9 0.5C12 0.5 15 1.8 17.5 6C15 10.2 12 11.5 9 11.5C6 11.5 3 10.2 0.5 6Z" fill="#2e3038"/><circle cx="9" cy="6" r="3.6" fill="#777777"/><circle cx="9" cy="6" r="2.8" fill="#2e3038"/></svg>
<div class="a" style="left:575px;top:955.5px;width:1px;height:50.5px;background:#747474"></div>
<div class="a" style="left:850px;top:955.5px;width:1px;height:50.5px;background:#747474"></div>
<div class="a" style="left:1066px;top:955.5px;width:1px;height:50.5px;background:#747474"></div>
<div class="a" style="left:1245px;top:955.5px;width:1px;height:50.5px;background:#747474"></div>
<div class="a" style="left:1450px;top:955.5px;width:1px;height:50.5px;background:#747474"></div>
<div class="a" style="left:1706px;top:955.5px;width:1px;height:50.5px;background:#747474"></div>
<div class="a" style="left:1758px;top:967.5px;width:5px;height:4.6px;border-radius:1px;background:#000"></div>
<div class="a" style="left:1758px;top:973.3px;width:5px;height:4.6px;border-radius:1px;background:#000"></div>
<div class="a" style="left:1758px;top:979.1px;width:5px;height:4.6px;border-radius:1px;background:#000"></div>
<svg class="a" style="left:1113.7px;top:975.0px" width="18" height="12" viewBox="0 0 18 12"><path d="M0.5 6C3 1.8 6 0.5 9 0.5C12 0.5 15 1.8 17.5 6C15 10.2 12 11.5 9 11.5C6 11.5 3 10.2 0.5 6Z" fill="#2e3038"/><circle cx="9" cy="6" r="3.6" fill="#808080"/><circle cx="9" cy="6" r="2.8" fill="#2e3038"/></svg>
<div class="a" style="left:241px;top:458.5px;width:0;height:0;border-left:5px solid transparent;border-right:5px solid transparent;border-top:5.5px solid #4e5155"></div>
<div class="a" style="left:241px;top:566.5px;width:0;height:0;border-left:5px solid transparent;border-right:5px solid transparent;border-top:5.5px solid #4e5155"></div>
<div class="a" style="left:241px;top:620.5px;width:0;height:0;border-left:5px solid transparent;border-right:5px solid transparent;border-top:5.5px solid #4e5155"></div>
<div class="a" style="left:241px;top:674.5px;width:0;height:0;border-left:5px solid transparent;border-right:5px solid transparent;border-top:5.5px solid #4e5155"></div>
<div class="a" style="left:241px;top:728.5px;width:0;height:0;border-left:5px solid transparent;border-right:5px solid transparent;border-top:5.5px solid #4e5155"></div>
<div class="a" style="left:241px;top:782.5px;width:0;height:0;border-left:5px solid transparent;border-right:5px solid transparent;border-top:5.5px solid #4e5155"></div>
<div class="a" style="left:241px;top:836.5px;width:0;height:0;border-left:5px solid transparent;border-right:5px solid transparent;border-top:5.5px solid #4e5155"></div>
<div class="a" style="left:241px;top:890.5px;width:0;height:0;border-left:5px solid transparent;border-right:5px solid transparent;border-top:5.5px solid #4e5155"></div>
<div class="a" style="left:241px;top:944.5px;width:0;height:0;border-left:5px solid transparent;border-right:5px solid transparent;border-top:5.5px solid #4e5155"></div>
<!-- modal -->
<div class="a" style="z-index:10;left:684px;top:503px;width:540px;height:220px;background:#fff;border-radius:6px"></div>
<div class="a" style="z-index:10;left:881px;top:575px;width:67px;height:31px;background:#f577b4"></div>
<div class="a" style="z-index:10;left:846px;top:651px;width:78px;height:34px;background:#f05761;border-radius:4px"></div>
<div class="a" style="z-index:10;left:933px;top:651px;width:129px;height:34px;background:#1570e8;border-radius:4px"></div>
<div class="a tx" style="z-index:1;left:108.00px;top:22.46px;font-size:19.19px;line-height:19.19px;font-weight:400;color:#e8dcbc;transform:scaleX(0.9181);width:222px;overflow:hidden;-webkit-mask-image:linear-gradient(90deg,#000 80%,transparent 100%)">GVenture Technology Pvt. Ltd.</div>
<div class="a tx" style="z-index:1;left:416.00px;top:22.46px;font-size:19.19px;line-height:19.19px;font-weight:400;color:#e8dcbc;transform:scaleX(0.9171);width:222px;overflow:hidden;-webkit-mask-image:linear-gradient(90deg,#000 84%,transparent 100%)">Feature #14625: Auth+ Changes</div>
<div class="a tx" style="z-index:1;left:722.00px;top:22.46px;font-size:19.19px;line-height:19.19px;font-weight:400;color:#e8dcbc;transform:scaleX(0.9130);">Accounts</div>
<div class="a tx" style="z-index:1;left:1028.75px;top:22.46px;font-size:19.19px;line-height:19.19px;font-weight:400;color:#f2eadb;transform:scaleX(0.8642);">Brands</div>
<div class="a tx" style="z-index:1;left:1334.00px;top:22.46px;font-size:19.19px;line-height:19.19px;font-weight:400;color:#e8dcbc;transform:scaleX(0.9078);">Campaign Registry</div>
<div class="a tx" style="z-index:1;left:227.00px;top:85.46px;font-size:19.19px;line-height:19.19px;font-weight:400;color:#f4a99c;transform:scaleX(0.9491);">Not secure</div>
<div class="a tx" style="z-index:1;left:342.00px;top:84.47px;font-size:20.35px;line-height:20.35px;font-weight:400;color:#d9cdb0;transform:scaleX(1.0459);"><span style="color:#f08876;text-decoration:line-through;text-decoration-thickness:1.5px">https</span><span style="color:#f3ecdc">://signalmash.gventure.info</span>/arun/#/new-campaign/brand-details/BDS1HIA-6201-4388</div>
<div class="a tx" style="z-index:1;left:336.60px;top:164.97px;font-size:15.99px;line-height:15.99px;font-weight:400;color:#8f95a0;transform:scaleX(0.9548);">Brand</div>
<div class="a tx" style="z-index:1;left:416.80px;top:162.71px;font-size:18.90px;line-height:18.90px;font-weight:400;color:#8f95a0;transform:scaleX(0.8677);">Brand details</div>
<div class="a tx" style="z-index:1;left:1521.70px;top:148.90px;font-size:15.12px;line-height:15.12px;font-weight:400;color:#9a9ea6;transform:scaleX(1.0165);">$ 179.00</div>
<div class="a tx" style="z-index:1;left:1500.80px;top:175.49px;font-size:12.06px;line-height:12.06px;font-weight:400;color:#8d9198;transform:scaleX(1.0820);-webkit-text-stroke:0.4px #8d9198">Current Balance</div>
<div class="a tx" style="z-index:1;left:1627.00px;top:161.40px;font-size:14.53px;line-height:14.53px;font-weight:400;color:#8d9198;transform:scaleX(1.0082);-webkit-text-stroke:0.45px #8d9198">Add Balance</div>
<div class="a tx" style="z-index:1;left:1744.00px;top:157.24px;font-size:12.35px;line-height:12.35px;font-weight:400;color:#c8b0b0;transform:scaleX(1.0182);">9</div>
<div class="a tx" style="z-index:1;left:85.00px;top:157.77px;font-size:23.55px;line-height:23.55px;font-weight:400;color:#979797;transform:scaleX(1.0291);"><span style="color:#8a8c90">signal</span><b>mash</b></div>
<div class="a tx" style="z-index:1;left:38.70px;top:237.32px;font-size:18.17px;line-height:18.17px;font-weight:400;color:#8a8c90;transform:scaleX(0.8868);">deepak kushwaha</div>
<div class="a tx" style="z-index:1;left:38.70px;top:261.07px;font-size:18.17px;line-height:18.17px;font-weight:400;color:#8a8c90;transform:scaleX(0.9089);">SAN : 100004388</div>
<div class="a tx" style="z-index:1;left:38.70px;top:293.30px;font-size:14.53px;line-height:14.53px;font-weight:700;color:#6c6e72;transform:scaleX(0.9551);">Verified</div>
<div class="a tx" style="z-index:1;left:78.50px;top:344.03px;font-size:18.75px;line-height:18.75px;font-weight:400;color:#5c5e62;transform:scaleX(0.9045);">Account Action</div>
<div class="a tx" style="z-index:1;left:78.50px;top:398.03px;font-size:18.75px;line-height:18.75px;font-weight:400;color:#5c5e62;transform:scaleX(0.8688);">Dashboard</div>
<div class="a tx" style="z-index:1;left:78.50px;top:452.03px;font-size:18.75px;line-height:18.75px;font-weight:400;color:#5c5e62;transform:scaleX(0.8861);">Numbers</div>
<div class="a tx" style="z-index:1;left:78.50px;top:506.03px;font-size:18.75px;line-height:18.75px;font-weight:400;color:#5c5e62;transform:scaleX(0.8797);">Connections</div>
<div class="a tx" style="z-index:1;left:78.50px;top:560.03px;font-size:18.75px;line-height:18.75px;font-weight:400;color:#5c5e62;transform:scaleX(0.8698);">Voice</div>
<div class="a tx" style="z-index:1;left:78.50px;top:614.03px;font-size:18.75px;line-height:18.75px;font-weight:400;color:#5c5e62;transform:scaleX(0.8579);">Messaging</div>
<div class="a tx" style="z-index:1;left:78.50px;top:668.03px;font-size:18.75px;line-height:18.75px;font-weight:400;color:#5c5e62;transform:scaleX(0.8586);">A2P Campaign</div>
<div class="a tx" style="z-index:1;left:78.50px;top:722.03px;font-size:18.75px;line-height:18.75px;font-weight:400;color:#5c5e62;transform:scaleX(0.8365);">Toll Free SMS</div>
<div class="a tx" style="z-index:1;left:78.50px;top:776.03px;font-size:18.75px;line-height:18.75px;font-weight:400;color:#5c5e62;transform:scaleX(0.8858);">Shortcode Number</div>
<div class="a tx" style="z-index:1;left:78.50px;top:830.03px;font-size:18.75px;line-height:18.75px;font-weight:400;color:#5c5e62;transform:scaleX(0.9114);">Billing</div>
<div class="a tx" style="z-index:1;left:78.50px;top:884.03px;font-size:18.75px;line-height:18.75px;font-weight:400;color:#5c5e62;transform:scaleX(0.8500);">API</div>
<div class="a tx" style="z-index:1;left:78.50px;top:938.03px;font-size:18.75px;line-height:18.75px;font-weight:400;color:#5c5e62;transform:scaleX(0.9357);">Notification</div>
<div class="a tx" style="z-index:1;left:78.50px;top:992.03px;font-size:18.75px;line-height:18.75px;font-weight:400;color:#5c5e62;transform:scaleX(0.9065);">Webhook</div>
<div class="a tx" style="z-index:1;left:347.90px;top:267.02px;font-size:18.17px;line-height:18.17px;font-weight:400;color:#2c2f36;transform:scaleX(0.9354);">Business Email Address:</div>
<div class="a tx" style="z-index:1;left:549.40px;top:267.02px;font-size:18.17px;line-height:18.17px;font-weight:700;color:#25282e;transform:scaleX(0.9294);">tushar@gventure.net</div>
<div class="a tx" style="z-index:1;left:1122.90px;top:266.92px;font-size:18.17px;line-height:18.17px;font-weight:400;color:#2c2f36;transform:scaleX(0.9662);">Email verified Date:</div>
<div class="a tx" style="z-index:1;left:1289.60px;top:266.92px;font-size:18.17px;line-height:18.17px;font-weight:700;color:#25282e;transform:scaleX(0.9782);">N/A</div>
<div class="a tx" style="z-index:1;left:372.50px;top:392.22px;font-size:20.35px;line-height:20.35px;font-weight:400;color:#2e3137;transform:scaleX(1.0196);-webkit-text-stroke:0.8px #2e3137">Vetting Details</div>
<div class="a tx" style="z-index:1;left:558.00px;top:392.22px;font-size:20.35px;line-height:20.35px;font-weight:400;color:#2a2d33;transform:scaleX(0.9680);">Refresh List</div>
<div class="a tx" style="z-index:1;left:1568.30px;top:398.57px;font-size:17.88px;line-height:17.88px;font-weight:400;color:#93a2b8;transform:scaleX(0.9534);">Apply for Vetting</div>
<div class="a tx" style="z-index:1;left:1741.00px;top:398.57px;font-size:17.88px;line-height:17.88px;font-weight:400;color:#0b3f88;transform:scaleX(0.9564);">Import Vetting</div>
<div class="a tx" style="z-index:1;left:347.00px;top:486.74px;font-size:17.44px;line-height:17.44px;font-weight:400;color:#2c2f36;transform:scaleX(0.9169);">Show</div>
<div class="a tx" style="z-index:1;left:406.00px;top:486.74px;font-size:17.44px;line-height:17.44px;font-weight:400;color:#2c2f36;transform:scaleX(0.9018);">10</div>
<div class="a tx" style="z-index:1;left:487.00px;top:486.74px;font-size:17.44px;line-height:17.44px;font-weight:400;color:#2c2f36;transform:scaleX(0.9552);">entries</div>
<div class="a tx" style="z-index:1;left:1593.00px;top:487.54px;font-size:17.44px;line-height:17.44px;font-weight:400;color:#2c2f36;transform:scaleX(0.9217);">Search:</div>
<div class="a tx" style="z-index:1;left:372.80px;top:554.24px;font-size:17.44px;line-height:17.44px;font-weight:700;color:#25282f;transform:scaleX(0.9010);">VETTING TYPE</div>
<div class="a tx" style="z-index:1;left:601.00px;top:554.24px;font-size:17.44px;line-height:17.44px;font-weight:700;color:#25282f;transform:scaleX(0.9010);">VETTING PROVIDER</div>
<div class="a tx" style="z-index:1;left:875.00px;top:554.24px;font-size:17.44px;line-height:17.44px;font-weight:700;color:#25282f;transform:scaleX(0.9010);">VETTING DATE</div>
<div class="a tx" style="z-index:1;left:1091.00px;top:554.24px;font-size:17.44px;line-height:17.44px;font-weight:700;color:#25282f;transform:scaleX(0.9010);">VETTING SCORE</div>
<div class="a tx" style="z-index:1;left:1271.00px;top:554.24px;font-size:17.44px;line-height:17.44px;font-weight:700;color:#25282f;transform:scaleX(0.8955);">VALID UNTIL</div>
<div class="a tx" style="z-index:1;left:1474.70px;top:554.24px;font-size:17.44px;line-height:17.44px;font-weight:700;color:#25282f;transform:scaleX(0.9073);">VETTING STATUS</div>
<div class="a tx" style="z-index:1;left:1731.70px;top:554.24px;font-size:17.44px;line-height:17.44px;font-weight:700;color:#25282f;transform:scaleX(0.8871);">ACTION</div>
<div class="a tx" style="z-index:1;left:372.50px;top:604.34px;font-size:19.33px;line-height:19.33px;font-weight:400;color:#2e3038;transform:scaleX(0.8574);">ENHANCED</div>
<div class="a tx" style="z-index:1;left:601.00px;top:604.34px;font-size:19.33px;line-height:19.33px;font-weight:400;color:#2e3038;transform:scaleX(0.8021);">AEGIS</div>
<div class="a tx" style="z-index:1;left:875.70px;top:604.34px;font-size:19.33px;line-height:19.33px;font-weight:400;color:#2e3038;transform:scaleX(0.8991);">10/24/2025 06:44</div>
<div class="a tx" style="z-index:1;left:1091.00px;top:604.34px;font-size:19.33px;line-height:19.33px;font-weight:400;color:#2e3038;transform:scaleX(0.8837);">80</div>
<div class="a tx" style="z-index:1;left:1270.50px;top:604.34px;font-size:19.33px;line-height:19.33px;font-weight:400;color:#2e3038;transform:scaleX(0.9028);">N/A</div>
<div class="a tx" style="z-index:1;left:1474.50px;top:604.34px;font-size:19.33px;line-height:19.33px;font-weight:400;color:#2e3038;transform:scaleX(0.8308);">ACTIVE</div>
<div class="a tx" style="z-index:1;left:372.50px;top:656.84px;font-size:19.33px;line-height:19.33px;font-weight:400;color:#2e3038;transform:scaleX(0.8428);">STANDARD</div>
<div class="a tx" style="z-index:1;left:601.00px;top:656.84px;font-size:19.33px;line-height:19.33px;font-weight:400;color:#2e3038;transform:scaleX(0.8021);">AEGIS</div>
<div class="a tx" style="z-index:1;left:875.70px;top:656.84px;font-size:19.33px;line-height:19.33px;font-weight:400;color:#2e3038;transform:scaleX(0.8991);">10/24/2025 06:30</div>
<div class="a tx" style="z-index:1;left:1091.00px;top:656.84px;font-size:19.33px;line-height:19.33px;font-weight:400;color:#2e3038;transform:scaleX(0.8837);">75</div>
<div class="a tx" style="z-index:1;left:1270.50px;top:656.84px;font-size:19.33px;line-height:19.33px;font-weight:400;color:#2e3038;transform:scaleX(0.9028);">N/A</div>
<div class="a tx" style="z-index:1;left:1474.50px;top:656.84px;font-size:19.33px;line-height:19.33px;font-weight:400;color:#2e3038;transform:scaleX(0.8308);">ACTIVE</div>
<div class="a tx" style="z-index:1;left:372.50px;top:709.34px;font-size:19.33px;line-height:19.33px;font-weight:400;color:#2e3038;transform:scaleX(0.8428);">STANDARD</div>
<div class="a tx" style="z-index:1;left:601.00px;top:709.34px;font-size:19.33px;line-height:19.33px;font-weight:400;color:#2e3038;transform:scaleX(0.8021);">AEGIS</div>
<div class="a tx" style="z-index:1;left:875.70px;top:709.34px;font-size:19.33px;line-height:19.33px;font-weight:400;color:#2e3038;transform:scaleX(0.8991);">10/24/2025 06:17</div>
<div class="a tx" style="z-index:1;left:1091.00px;top:709.34px;font-size:19.33px;line-height:19.33px;font-weight:400;color:#2e3038;transform:scaleX(0.8837);">60</div>
<div class="a tx" style="z-index:1;left:1270.50px;top:709.34px;font-size:19.33px;line-height:19.33px;font-weight:400;color:#2e3038;transform:scaleX(0.9028);">N/A</div>
<div class="a tx" style="z-index:1;left:1474.50px;top:709.34px;font-size:19.33px;line-height:19.33px;font-weight:400;color:#2e3038;transform:scaleX(0.8308);">ACTIVE</div>
<div class="a tx" style="z-index:1;left:372.50px;top:761.34px;font-size:19.33px;line-height:19.33px;font-weight:400;color:#2e3038;transform:scaleX(0.8321);">AUTHPLUS</div>
<div class="a tx" style="z-index:1;left:601.00px;top:761.34px;font-size:19.33px;line-height:19.33px;font-weight:400;color:#2e3038;transform:scaleX(0.8021);">AEGIS</div>
<div class="a tx" style="z-index:1;left:875.70px;top:761.34px;font-size:19.33px;line-height:19.33px;font-weight:400;color:#2e3038;transform:scaleX(0.8991);">10/24/2025 06:10</div>
<div class="a tx" style="z-index:1;left:1091.00px;top:761.34px;font-size:19.33px;line-height:19.33px;font-weight:400;color:#2e3038;transform:scaleX(0.8651);">0</div>
<div class="a tx" style="z-index:1;left:1270.50px;top:761.34px;font-size:19.33px;line-height:19.33px;font-weight:400;color:#2e3038;transform:scaleX(0.9028);">N/A</div>
<div class="a tx" style="z-index:1;left:1474.50px;top:761.34px;font-size:19.33px;line-height:19.33px;font-weight:400;color:#2e3038;transform:scaleX(0.8178);">EXPIRED</div>
<div class="a tx" style="z-index:1;left:372.50px;top:813.84px;font-size:19.33px;line-height:19.33px;font-weight:400;color:#2e3038;transform:scaleX(0.8321);">AUTHPLUS</div>
<div class="a tx" style="z-index:1;left:601.00px;top:813.84px;font-size:19.33px;line-height:19.33px;font-weight:400;color:#2e3038;transform:scaleX(0.8021);">AEGIS</div>
<div class="a tx" style="z-index:1;left:875.70px;top:813.84px;font-size:19.33px;line-height:19.33px;font-weight:400;color:#2e3038;transform:scaleX(0.8991);">10/24/2025 06:02</div>
<div class="a tx" style="z-index:1;left:1091.00px;top:813.84px;font-size:19.33px;line-height:19.33px;font-weight:400;color:#2e3038;transform:scaleX(0.8651);">0</div>
<div class="a tx" style="z-index:1;left:1270.50px;top:813.84px;font-size:19.33px;line-height:19.33px;font-weight:400;color:#2e3038;transform:scaleX(0.9028);">N/A</div>
<div class="a tx" style="z-index:1;left:1474.50px;top:813.84px;font-size:19.33px;line-height:19.33px;font-weight:400;color:#2e3038;transform:scaleX(0.8178);">EXPIRED</div>
<div class="a tx" style="z-index:1;left:372.50px;top:866.34px;font-size:19.33px;line-height:19.33px;font-weight:400;color:#2e3038;transform:scaleX(0.8321);">AUTHPLUS</div>
<div class="a tx" style="z-index:1;left:601.00px;top:866.34px;font-size:19.33px;line-height:19.33px;font-weight:400;color:#2e3038;transform:scaleX(0.8021);">AEGIS</div>
<div class="a tx" style="z-index:1;left:875.70px;top:866.34px;font-size:19.33px;line-height:19.33px;font-weight:400;color:#2e3038;transform:scaleX(0.8991);">10/24/2025 05:58</div>
<div class="a tx" style="z-index:1;left:1091.00px;top:866.34px;font-size:19.33px;line-height:19.33px;font-weight:400;color:#2e3038;transform:scaleX(0.8651);">0</div>
<div class="a tx" style="z-index:1;left:1270.50px;top:866.34px;font-size:19.33px;line-height:19.33px;font-weight:400;color:#2e3038;transform:scaleX(0.9028);">N/A</div>
<div class="a tx" style="z-index:1;left:1474.50px;top:866.34px;font-size:19.33px;line-height:19.33px;font-weight:400;color:#2e3038;transform:scaleX(0.8178);">EXPIRED</div>
<div class="a tx" style="z-index:1;left:372.50px;top:918.84px;font-size:19.33px;line-height:19.33px;font-weight:400;color:#2e3038;transform:scaleX(0.8321);">AUTHPLUS</div>
<div class="a tx" style="z-index:1;left:601.00px;top:918.84px;font-size:19.33px;line-height:19.33px;font-weight:400;color:#2e3038;transform:scaleX(0.8021);">AEGIS</div>
<div class="a tx" style="z-index:1;left:875.70px;top:918.84px;font-size:19.33px;line-height:19.33px;font-weight:400;color:#2e3038;transform:scaleX(0.8991);">10/24/2025 05:18</div>
<div class="a tx" style="z-index:1;left:1091.00px;top:918.84px;font-size:19.33px;line-height:19.33px;font-weight:400;color:#2e3038;transform:scaleX(0.8651);">0</div>
<div class="a tx" style="z-index:1;left:1270.50px;top:918.84px;font-size:19.33px;line-height:19.33px;font-weight:400;color:#2e3038;transform:scaleX(0.9028);">N/A</div>
<div class="a tx" style="z-index:1;left:1474.50px;top:918.84px;font-size:19.33px;line-height:19.33px;font-weight:400;color:#2e3038;transform:scaleX(0.8178);">EXPIRED</div>
<div class="a tx" style="z-index:1;left:372.50px;top:970.84px;font-size:19.33px;line-height:19.33px;font-weight:400;color:#2e3038;transform:scaleX(0.8574);">ENHANCED</div>
<div class="a tx" style="z-index:1;left:601.00px;top:970.84px;font-size:19.33px;line-height:19.33px;font-weight:400;color:#2e3038;transform:scaleX(0.8021);">AEGIS</div>
<div class="a tx" style="z-index:1;left:875.70px;top:970.84px;font-size:19.33px;line-height:19.33px;font-weight:400;color:#2e3038;transform:scaleX(0.8991);">10/24/2025 05:14</div>
<div class="a tx" style="z-index:1;left:1091.00px;top:970.84px;font-size:19.33px;line-height:19.33px;font-weight:400;color:#2e3038;transform:scaleX(0.8837);">80</div>
<div class="a tx" style="z-index:1;left:1270.50px;top:970.84px;font-size:19.33px;line-height:19.33px;font-weight:400;color:#2e3038;transform:scaleX(0.9028);">N/A</div>
<div class="a tx" style="z-index:1;left:1474.50px;top:970.84px;font-size:19.33px;line-height:19.33px;font-weight:400;color:#2e3038;transform:scaleX(0.8308);">ACTIVE</div>
<div class="a tx" style="z-index:11;left:821.00px;top:529.38px;font-size:20.93px;line-height:20.93px;font-weight:400;color:#50555d;transform:scaleX(0.9747);-webkit-text-stroke:0.6px #50555d">Appeal Request Confirmation</div>
<div class="a tx" style="z-index:11;left:766.00px;top:580.07px;font-size:20.35px;line-height:20.35px;font-weight:400;color:#4b5058;transform:scaleX(0.7915);">This appeal will</div>
<div class="a tx" style="z-index:11;left:882.00px;top:580.07px;font-size:20.35px;line-height:20.35px;font-weight:700;color:#ffffff;transform:scaleX(0.7865);">cost $10</div>
<div class="a tx" style="z-index:11;left:949.00px;top:580.07px;font-size:20.35px;line-height:20.35px;font-weight:400;color:#4b5058;transform:scaleX(0.8019);">regardless of the outcome.</div>
<div class="a tx" style="z-index:11;left:846.80px;top:610.97px;font-size:20.35px;line-height:20.35px;font-weight:400;color:#4b5058;transform:scaleX(0.8139);">Do you still want to continue?</div>
<div class="a tx" style="z-index:11;left:864.80px;top:660.90px;font-size:14.53px;line-height:14.53px;font-weight:700;color:#ffffff;transform:scaleX(0.8444);">Cancel</div>
<div class="a tx" style="z-index:11;left:952.80px;top:660.90px;font-size:14.53px;line-height:14.53px;font-weight:700;color:#ffffff;transform:scaleX(0.8416);">Confirm Appeal</div>
<div class="a tx" style="z-index:21;left:76.60px;top:1023.12px;font-size:18.17px;line-height:18.17px;font-weight:400;color:#ffffff;transform:scaleX(0.8379);">31°C</div>
<div class="a tx" style="z-index:21;left:76.60px;top:1047.17px;font-size:17.88px;line-height:17.88px;font-weight:400;color:#e2ddd6;transform:scaleX(0.9716);">Sunny</div>
<div class="a tx" style="z-index:21;left:54.00px;top:1021.17px;font-size:15.99px;line-height:15.99px;font-weight:400;color:#ffffff;transform:scaleX(0.8998);">7</div>
<div class="a tx" style="z-index:21;left:527.50px;top:1034.14px;font-size:21.80px;line-height:21.80px;font-weight:400;color:#5c5c5c;transform:scaleX(0.8688);">Search</div>
<div class="a tx" style="z-index:21;left:1171.00px;top:1023.05px;font-size:16.72px;line-height:16.72px;font-weight:400;color:#000000;transform:scaleX(0.9681);">30</div>
<div class="a tx" style="z-index:21;left:1780.00px;top:1022.66px;font-size:19.19px;line-height:19.19px;font-weight:400;color:#ffffff;transform:scaleX(0.9091);">12:08 PM</div>
<div class="a tx" style="z-index:21;left:1763.00px;top:1046.80px;font-size:18.31px;line-height:18.31px;font-weight:400;color:#ffffff;transform:scaleX(1.0002);">10/24/2025</div>
<!-- ======== TASKBAR ======== -->
<div class="a" style="z-index:20;left:0;top:1008px;width:1920px;height:72px;background:linear-gradient(90deg,#30261a 0%,#2e251a 30%,#2b221f 60%,#2a2120 100%)"></div>
<div class="a" style="z-index:20;left:0;top:1008px;width:1920px;height:2px;background:#4c463b"></div>
<div class="a" style="z-index:20;left:1908px;top:1000px;width:12px;height:8px;background:#f1f1f1"></div>
<!-- weather -->
<div class="a" style="z-index:20;left:32px;top:1028px;width:30px;height:30px;border-radius:50%;background:linear-gradient(135deg,#f7c22c 0%,#f59a1e 50%,#ee6a12 100%)"></div>
<div class="a" style="z-index:20;left:46px;top:1018px;width:23px;height:23px;border-radius:50%;background:#c8261c"></div>
<!-- start -->
<svg class="a" style="z-index:20;left:416px;top:1027px" width="35" height="35" viewBox="0 0 35 35">
<defs><linearGradient id="wg" x1="0" y1="0" x2="1" y2="1"><stop offset="0" stop-color="#7fe6fb"/><stop offset="1" stop-color="#1a8ef0"/></linearGradient></defs>
<rect x="0" y="0" width="16.5" height="16.5" rx="1.5" fill="url(#wg)"/><rect x="18.5" y="0" width="16.5" height="16.5" rx="1.5" fill="url(#wg)"/>
<rect x="0" y="18.5" width="16.5" height="16.5" rx="1.5" fill="url(#wg)"/><rect x="18.5" y="18.5" width="16.5" height="16.5" rx="1.5" fill="url(#wg)"/>
</svg>
<!-- search pill -->
<div class="a" style="z-index:20;left:473px;top:1022px;width:325px;height:44px;border-radius:22px;background:#f2f2f2"></div>
<svg class="a" style="z-index:20;left:488px;top:1032px" width="24" height="24" viewBox="0 0 24 24"><circle cx="9.5" cy="9.5" r="7.8" fill="none" stroke="#1d1d1d" stroke-width="2.4"/><path d="M15 15L21.5 21.5" stroke="#1d1d1d" stroke-width="2.8" stroke-linecap="round"/></svg>
<svg class="a" style="z-index:20;left:722px;top:1025px" width="71" height="37" viewBox="0 0 71 37">
<defs><linearGradient id="ksky" x1="0" y1="0" x2="0" y2="1"><stop offset="0" stop-color="#b6e4ee"/><stop offset="0.6" stop-color="#f4ece4"/><stop offset="1" stop-color="#f8e8d8"/></linearGradient>
<linearGradient id="kgr" x1="0" y1="0" x2="0" y2="1"><stop offset="0" stop-color="#b8a050"/><stop offset="1" stop-color="#3a8a2a"/></linearGradient></defs>
<path d="M2 28Q4 6 35.5 1Q67 6 69 28Z" fill="url(#ksky)"/>
<circle cx="17" cy="20" r="5.5" fill="#fff"/><circle cx="51" cy="18" r="6" fill="#fff"/>
<path d="M13 27Q25 22 37 25Q48 21 62 27Z" fill="#5a90b0"/>
<circle cx="33.4" cy="24.5" r="2.2" fill="#f8d050"/>
<path d="M0.5 29Q35 24 70.5 29Q66 31 62 31Q55 37 35 36.8Q16 37 9 31Q3 31 0.5 29Z" fill="url(#kgr)"/>
<path d="M4 29L3 14M7 29L9 12M6 29L2 20M61 29L60 10M64 29L66 14M62 29L58 20" stroke="#5a7a38" stroke-width="1.6" fill="none"/>
<path d="M20 35Q21 25 25 22Q23 17 22 14Q25 15 26.5 18Q28 15 31.5 14Q30 18 29 21Q31 27 30 35Z" fill="#d49a68"/>
<path d="M24 35Q25 29 26.5 27Q28 29 28 35Z" fill="#f4dcc0"/>
<path d="M37 36Q36 24 38 17Q35 10 33.5 4Q37 6 39.5 10Q42 6 46.5 4Q45 10 42 15Q49 19 50.5 30Q56 33 59 34.6L50 35Z" fill="#c88c5a"/>
<path d="M39 36Q39 26 41 22Q44 26 44 36Z" fill="#f2d8bc"/>
</svg>
<!-- task view -->
<div class="a" style="z-index:20;left:819px;top:1037px;width:27px;height:24px;border-radius:3px;background:linear-gradient(180deg,#7a7a7a,#505050)"></div>
<div class="a" style="z-index:20;left:828px;top:1027px;width:27px;height:24px;border-radius:3px;background:linear-gradient(180deg,#ffffff,#d8d8d8)"></div>
<!-- copilot -->
<svg class="a" style="z-index:20;left:886px;top:1029px" width="34" height="30" viewBox="0 0 34 30">
<defs><linearGradient id="cp1" x1="0" y1="0" x2="0" y2="1"><stop offset="0" stop-color="#1f9cf0"/><stop offset="0.55" stop-color="#6cc84a"/><stop offset="1" stop-color="#f5c01e"/></linearGradient>
<linearGradient id="cp2" x1="0" y1="0" x2="0" y2="1"><stop offset="0" stop-color="#b05ef0"/><stop offset="0.5" stop-color="#ee6aa8"/><stop offset="1" stop-color="#f7a060"/></linearGradient></defs>
<path d="M4.5 3.5Q5.5 0 9 0H23Q25.5 0 26 2.5L27 8H21L12.7 21H3Q0 21 0.8 17.5Z" fill="url(#cp1)"/>
<path d="M18 0H23Q25.5 0 26 2.5L27 8H21.5Z" fill="#1450c8"/>
<path d="M23.5 8H30Q33.5 8 32.8 11.5L28.2 26.5Q27.3 30 23.8 30H12Q9.3 30 9 27L8.6 21H15.2Z" fill="url(#cp2)"/>
<path d="M8.6 21H15.2L12 30Q9.3 30 9 27Z" fill="#f05a28"/>
</svg>
<!-- folder -->
<svg class="a" style="z-index:20;left:951px;top:1028px" width="36" height="33" viewBox="0 0 36 33">
<path d="M0 2Q0 0 2 0H12L16 3H34Q36 3 36 5V31Q36 33 34 33H2Q0 33 0 31Z" fill="#e8a80e"/>
<path d="M0 6H34Q36 6 36 8V31Q36 33 34 33H2Q0 33 0 31Z" fill="#fcca3e"/>
<path d="M6 24Q6 22 8 22H28Q30 22 30 24V33H6Z" fill="#1a7fd8"/>
<rect x="11" y="26" width="14" height="1.6" fill="#0d5aa8"/>
</svg>
<!-- thunderbird -->
<svg class="a" style="z-index:20;left:1016px;top:1026px" width="37" height="36" viewBox="0 0 37 36">
<path d="M18.5 3.5A16 16 0 1 0 34.5 19.5C34.5 14 32 10 28.5 7.5Z" fill="#1c6fd6"/>
<path d="M6 8Q3 14 4.5 21Q7 15 11 13Q8 11 6 8Z" fill="#4aa0f0"/>
<path d="M12 10Q18 1 28 2Q34 3 37 6Q33 6 31 7Q36 12 34 20Q31 12 24 11Q17 10 12 10Z" fill="#2b86ec"/>
<path d="M28 6.5L29.5 7.5" stroke="#dfefff" stroke-width="1.2"/>
<ellipse cx="19.5" cy="20.5" rx="9" ry="7.5" fill="#e4eef9"/>
<path d="M10.8 18.5L19.5 24L28.2 18.5" fill="none" stroke="#b8cde8" stroke-width="1.4"/>
<path d="M8 27Q16 34 28 27Q20 31 8 27Z" fill="#5e8ee0"/>
</svg>
<!-- chrome -->
<div class="a" style="z-index:20;left:1071px;top:1014px;width:60px;height:59px;border-radius:6px;background:#3a3230"></div>
<svg class="a" style="z-index:20;left:1082px;top:1026px" width="36" height="36" viewBox="0 0 36 36">
<circle cx="18" cy="18" r="18" fill="#2ea44f"/>
<path d="M18 0A18 18 0 0 1 33.6 9H18Z M18 0A18 18 0 0 0 2.4 9L10.2 22.5A9 9 0 0 1 18 9H33.6A18 18 0 0 0 18 0Z" fill="#e33b2e"/>
<path d="M33.6 9A18 18 0 0 1 18 36L25.8 22.5A9 9 0 0 0 18 9Z" fill="#f9c20a"/>
<circle cx="18" cy="18" r="8.2" fill="#fff"/><circle cx="18" cy="18" r="6.5" fill="#1a73e8"/>
</svg>
<div class="a" style="z-index:20;left:1089px;top:1068px;width:24px;height:5px;border-radius:3px;background:#4cc2ff"></div>
<!-- teams -->
<svg class="a" style="z-index:20;left:1148px;top:1028px" width="37" height="32" viewBox="0 0 37 32">
<circle cx="28" cy="10" r="5" fill="#7b83eb"/><path d="M20 14H35V25Q35 31 28 31Q20 31 20 25Z" fill="#6a70d8"/>
<circle cx="18" cy="8" r="6" fill="#7b83eb"/><path d="M9 14H27V26Q27 32 18 32Q9 32 9 26Z" fill="#7b83eb"/>
<rect x="0" y="8" width="18" height="18" rx="2" fill="#4b53bc"/>
<path d="M4 12H14M9 12V23" stroke="#fff" stroke-width="2.4"/>
</svg>
<div class="a" style="z-index:20;left:1165px;top:1019px;width:31px;height:24px;border-radius:12px;background:#4cc2ff"></div>
<div class="a" style="z-index:20;left:1163px;top:1068px;width:9px;height:5px;border-radius:3px;background:#a8a4a0"></div>
<!-- notepad -->
<svg class="a" style="z-index:20;left:1219px;top:1026px" width="29" height="36" viewBox="0 0 29 36">
<rect x="0" y="2" width="28" height="34" rx="2" fill="#e06a10"/>
<rect x="0" y="2" width="28" height="31" rx="2" fill="#f2efea"/>
<rect x="0" y="2" width="28" height="28" rx="2" fill="#4cc0e0"/>
<path d="M5 10H23M5 16H23M5 22H23" stroke="#0e6a90" stroke-width="1.8"/>
<path d="M4 0L6 3L4 5L2 3Z M11 0L13 3L11 5L9 3Z M18 0L20 3L18 5L16 3Z M25 0L27 3L25 5L23 3Z" fill="#0e6a90"/>
</svg>
<div class="a" style="z-index:20;left:1229px;top:1068px;width:9px;height:5px;border-radius:3px;background:#a8a4a0"></div>
<!-- word -->
<svg class="a" style="z-index:20;left:1283px;top:1028px" width="32" height="32" viewBox="0 0 32 32">
<rect x="16" y="3" width="16" height="26" rx="1" fill="#2b5cb0"/><rect x="18" y="5" width="11" height="22" fill="#fff"/>
<path d="M19 9H28M19 13H28M19 17H28M19 21H28" stroke="#2b5cb0" stroke-width="1.4"/>
<path d="M0 4L19 0V32L0 28Z" fill="#2b579a"/>
<path d="M3 10L5.5 22L8 13L10.5 22L13 10" fill="none" stroke="#fff" stroke-width="2"/>
</svg>
<div class="a" style="z-index:20;left:1295px;top:1068px;width:9px;height:5px;border-radius:3px;background:#a8a4a0"></div>
<!-- dolphin -->
<svg class="a" style="z-index:20;left:1349px;top:1026px" width="32" height="37" viewBox="0 0 32 37">
<path d="M1.2 16.7C3 14 5 9 7.9 7.3L14.1 5.1C16 3 18 0.5 20.3 0.2C21 2 21 4.5 21.7 6C25 7 28.8 8 28.8 10.9C30.5 13 30.8 15 30.6 17.1C30 21 28.5 24 27.4 26C26.5 28 26 29.5 25.7 30.9C25 33 23 35.5 21.2 35.8C20 34 19.4 31 19.4 29.6C18 28 16.3 26 16.3 24.7C18.5 24 21 24.5 23.9 24.2C24 22 23.5 19.5 23 18C21 16 19.5 15.8 18.1 15.8C19 17 20.5 19 20.8 19.8C18 19.5 16.5 18.5 15 18C13 17 11.5 16.5 10.1 16.7C7 17 4 18.5 2.6 18Z" fill="#2f8cf5" stroke="#e8e0d0" stroke-width="0.4"/>
</svg>
<div class="a" style="z-index:20;left:1361px;top:1068px;width:9px;height:5px;border-radius:3px;background:#a8a4a0"></div>
<!-- tray -->
<svg class="a" style="z-index:20;left:1500px;top:1038px" width="18" height="11" viewBox="0 0 18 11"><path d="M1.5 9.5L9 2L16.5 9.5" fill="none" stroke="#fff" stroke-width="2"/></svg>
<svg class="a" style="z-index:20;left:1544px;top:1031px" width="27" height="27" viewBox="0 0 27 27">
<path d="M3 12A10 10 0 0 1 21 6" fill="none" stroke="#fff" stroke-width="1.6"/><path d="M22 1V7H16" fill="none" stroke="#fff" stroke-width="1.6"/>
<path d="M22 15A10 10 0 0 1 5 21" fill="none" stroke="#fff" stroke-width="1.6"/><path d="M2 26V20H8" fill="none" stroke="#fff" stroke-width="1.6"/>
<circle cx="19" cy="19" r="6" fill="#f7a00c"/>
</svg>
<svg class="a" style="z-index:20;left:1596px;top:1032px" width="18" height="25" viewBox="0 0 18 25"><rect x="5" y="1" width="8" height="15" rx="4" fill="none" stroke="#8ed8f8" stroke-width="2"/><path d="M1.5 11A7.5 7.5 0 0 0 16.5 11M9 18.5V24" fill="none" stroke="#8ed8f8" stroke-width="2"/></svg>
<svg class="a" style="z-index:20;left:1640px;top:1034px" width="26" height="19" viewBox="0 0 26 19"><path d="M1.5 6.5A16 16 0 0 1 24.5 6.5M5 10A11 11 0 0 1 21 10M8.5 13.5A6 6 0 0 1 17.5 13.5" fill="none" stroke="#fff" stroke-width="2"/><circle cx="13" cy="17" r="2" fill="#fff"/></svg>
<svg class="a" style="z-index:20;left:1676px;top:1033px" width="26" height="21" viewBox="0 0 26 21"><path d="M1 7H5.5L11 2V19L5.5 14H1Z" fill="none" stroke="#fff" stroke-width="1.7" stroke-linejoin="round"/><path d="M15 7A5 5 0 0 1 15 14M18.5 4A9 9 0 0 1 18.5 17M22 1.5A13 13 0 0 1 22 19.5" fill="none" stroke="#fff" stroke-width="1.7"/></svg>
<svg class="a" style="z-index:20;left:1712px;top:1035px" width="26" height="18" viewBox="0 0 26 18"><rect x="1" y="1" width="21" height="16" rx="3.5" fill="none" stroke="#fff" stroke-width="1.8"/><rect x="4" y="4" width="10" height="10" rx="1" fill="#fff"/><rect x="23" y="6" width="2.5" height="6" rx="1" fill="#fff"/></svg>
<svg class="a" style="z-index:20;left:1867px;top:1032px" width="23" height="25" viewBox="0 0 23 25">
<path d="M10 3C5.5 3 4 6.5 4 10V15L1.5 19H19L16.5 15V13" fill="#fff" stroke="#fff" stroke-width="1.5" stroke-linejoin="round"/><path d="M7.5 21A3 3 0 0 0 13 21Z" fill="#fff"/>
<path d="M8 8H13L8 14H13" fill="none" stroke="#2a2120" stroke-width="1.6"/><path d="M15 2H21L15 8H21" fill="none" stroke="#fff" stroke-width="1.6"/>
</svg>
</body></html>
